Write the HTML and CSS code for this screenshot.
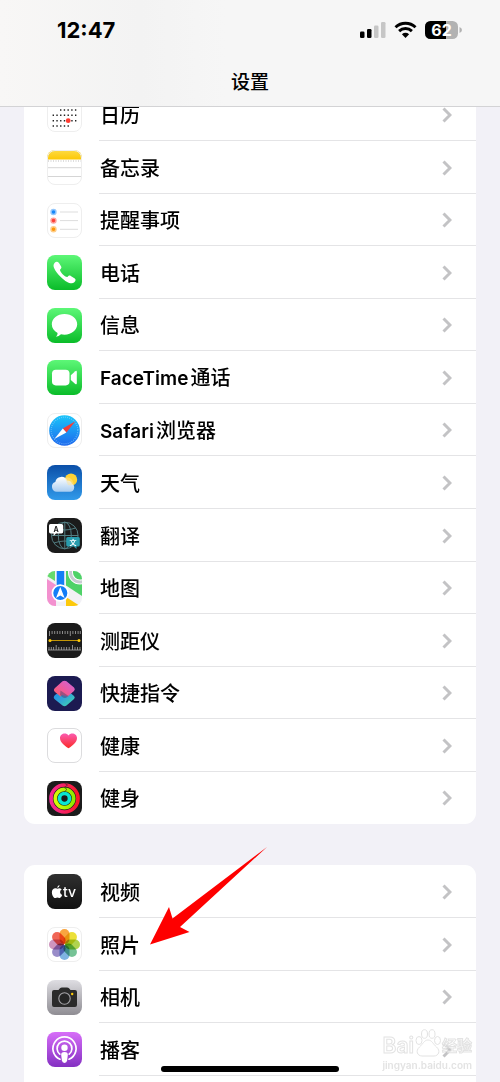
FILE: index.html
```html
<!DOCTYPE html>
<html lang="zh-CN">
<head>
  <meta charset="UTF-8">
  <meta name="viewport" content="width=device-width, initial-scale=1">
  <title>设置</title>
  <link rel="stylesheet" href="styles.css">
</head>
<body>

<header class="top-bar">
  <div class="status">
    <span class="time">12:47</span>
    <div class="status-icons">
      <svg class="signal" width="26" height="18" viewBox="0 0 26 18">
        <rect x="0" y="10.500" width="4.500" height="6.500" rx="1.300"/>
        <rect x="7" y="8" width="4.500" height="9" rx="1.300"/>
        <rect x="14" y="4.500" width="4.500" height="12.500" rx="1.300" fill="#c6c6c6"/>
        <rect x="21" y="1" width="4.500" height="16" rx="1.300" fill="#c6c6c6"/>
      </svg>
      <svg class="wifi" width="23" height="18" viewBox="0 0 23 18">
        <path d="M1.500 6.200A14.500 14.500 0 0 1 21.500 6.200M5.100 10.100A9.300 9.300 0 0 1 17.900 10.100" fill="none" stroke="#000" stroke-width="2.900"/>
        <path d="M11.500 17L7.900 13.200Q11.500 10.400 15.100 13.200Z"/>
      </svg>
      <svg class="battery" width="38" height="18" viewBox="0 0 38 18">
        <rect width="33" height="18" rx="5.500" fill="#b2b2b2"/>
        <path d="M5.500 0H21V18H5.500A5.500 5.500 0 0 1 0 12.500V5.500A5.500 5.500 0 0 1 5.500 0Z"/>
        <path d="M34.500 6Q37 7 37 9T34.500 12Z" fill="#b2b2b2"/>
        <text x="16.500" y="14.800" text-anchor="middle" class="battery-text">62</text>
      </svg>
    </div>
  </div>
  <h1>设置</h1>
</header>

<main class="settings">
  <nav class="group">
    <a class="row" href="#calendar">
      <svg class="icon light" viewBox="0 0 35 35">
        <g stroke="#222" stroke-width="1.400" stroke-dasharray="1.400 2.330">
          <path d="M13 13H30M5.600 18.300H30M5.600 23.700H30M5.600 29H22"/>
        </g>
        <circle cx="21.200" cy="23.700" r="2.400" fill="#ff3b30"/>
      </svg>
      <span class="label">日历</span>
      <svg class="chevron" viewBox="0 0 10 16"><path d="M1.500 1.500L8 8L1.500 14.500"/></svg>
    </a>
    <a class="row" href="#notes">
      <svg class="icon light" viewBox="0 0 35 35">
        <defs><linearGradient id="notes" x2="0" y2="1"><stop stop-color="#fddb45"/><stop offset="1" stop-color="#fcc806"/></linearGradient></defs>
        <path d="M0 0H35V9.500H0Z" fill="url(#notes)"/>
        <path d="M1 11H35" stroke="#bbb" stroke-dasharray="1 1.500"/>
        <path d="M0 17.700H35M0 26.500H35" stroke="#d5d5d5"/>
      </svg>
      <span class="label">备忘录</span>
      <svg class="chevron" viewBox="0 0 10 16"><path d="M1.500 1.500L8 8L1.500 14.500"/></svg>
    </a>
    <a class="row" href="#reminders">
      <svg class="icon light" viewBox="0 0 35 35">
        <path d="M13 9H31M13 17.600H31M13 26.300H31" stroke="#ddd"/>
        <g stroke-width="1.400">
          <circle cx="6.500" cy="9" r="2.500" fill="#1687fa" stroke="#93c7fc"/>
          <circle cx="6.500" cy="17.600" r="2.500" fill="#fb4238" stroke="#fda49f"/>
          <circle cx="6.500" cy="26.300" r="2.500" fill="#fd9709" stroke="#fecd88"/>
        </g>
      </svg>
      <span class="label">提醒事项</span>
      <svg class="chevron" viewBox="0 0 10 16"><path d="M1.500 1.500L8 8L1.500 14.500"/></svg>
    </a>
    <a class="row" href="#phone">
      <svg class="icon" viewBox="0 0 35 35">
        <defs><linearGradient id="green" x2="0" y2="1"><stop stop-color="#5df777"/><stop offset="1" stop-color="#0abc29"/></linearGradient></defs>
        <rect width="35" height="35" fill="url(#green)"/>
        <path d="M7.500 8C9 6.300 10.800 6.400 12 8L14 11.300C14.800 12.600 14.400 13.300 13 14.700C12.900 17 18 22.300 20.400 22C21.800 20.600 22.500 20.200 23.800 21L27.800 23.600C29 24.700 28.800 25.800 27.300 27.300C25 29.600 20 28.300 13.800 22C7.500 15.500 5 10.800 7.500 8Z" fill="#fff"/>
      </svg>
      <span class="label">电话</span>
      <svg class="chevron" viewBox="0 0 10 16"><path d="M1.500 1.500L8 8L1.500 14.500"/></svg>
    </a>
    <a class="row" href="#messages">
      <svg class="icon" viewBox="0 0 35 35">
        <rect width="35" height="35" fill="url(#green)"/>
        <path d="M17.500 6C24.700 6 30.200 10.600 30.200 16.300S24.700 26.700 17.500 26.700Q15.600 26.700 14 26.300Q11.800 28.400 9 28.700Q10.700 27 10.600 24.900C7 23 4.800 20 4.800 16.300C4.800 10.600 10.300 6 17.500 6Z" fill="#fff"/>
      </svg>
      <span class="label">信息</span>
      <svg class="chevron" viewBox="0 0 10 16"><path d="M1.500 1.500L8 8L1.500 14.500"/></svg>
    </a>
    <a class="row" href="#facetime">
      <svg class="icon" viewBox="0 0 35 35">
        <rect width="35" height="35" fill="url(#green)"/>
        <rect x="5" y="9.800" width="17.500" height="15.600" rx="3.800" fill="#fff"/>
        <path d="M23.800 15.200L28.300 11.200Q29.800 10.200 29.800 12V23.200Q29.800 25 28.300 24L23.800 20Z" fill="#fff"/>
      </svg>
      <span class="label"><span class="latin">FaceTime</span>通话</span>
      <svg class="chevron" viewBox="0 0 10 16"><path d="M1.500 1.500L8 8L1.500 14.500"/></svg>
    </a>
    <a class="row" href="#safari">
      <svg class="icon light" viewBox="0 0 35 35">
        <defs><linearGradient id="safari" x2="0" y2="1"><stop stop-color="#1bc6fa"/><stop offset="1" stop-color="#1e68ed"/></linearGradient></defs>
        <circle cx="17.500" cy="17.500" r="15.300" fill="url(#safari)"/>
        <circle cx="17.500" cy="17.500" r="13.300" fill="none" stroke="#8fd0fb" stroke-width="1.200" stroke-dasharray=".6 1.500"/>
        <path d="M28.400 8.300L19.400 19.500L15.800 15.500Z" fill="#f53e38"/>
        <path d="M7.300 26L15.800 15.500L19.400 19.500Z" fill="#fff"/>
      </svg>
      <span class="label"><span class="latin">Safari</span>浏览器</span>
      <svg class="chevron" viewBox="0 0 10 16"><path d="M1.500 1.500L8 8L1.500 14.500"/></svg>
    </a>
    <a class="row" href="#weather">
      <svg class="icon" viewBox="0 0 35 35">
        <defs>
          <linearGradient id="sky" x2="0" y2="1"><stop stop-color="#0b4fa8"/><stop offset="1" stop-color="#319aea"/></linearGradient>
          <linearGradient id="cloud" x2="0" y2="1"><stop stop-color="#fff"/><stop offset="1" stop-color="#a9cdf1"/></linearGradient>
        </defs>
        <rect width="35" height="35" fill="url(#sky)"/>
        <circle cx="24" cy="14.700" r="6.200" fill="#fed235"/>
        <path d="M9.700 26.700A5 5 0 0 1 8.300 17A6.300 6.300 0 0 1 20.200 15.500Q24.600 15.700 24.900 18.800Q27.400 19.700 27.200 22.800Q26.700 26.700 23 26.700Z" fill="url(#cloud)"/>
        <path d="M18 13.200Q20 11.300 23 13T27 19Q25 21 21 20Z" fill="#ffe396" opacity=".5"/>
      </svg>
      <span class="label">天气</span>
      <svg class="chevron" viewBox="0 0 10 16"><path d="M1.500 1.500L8 8L1.500 14.500"/></svg>
    </a>
    <a class="row" href="#translate">
      <svg class="icon" viewBox="0 0 35 35">
        <rect width="35" height="35" fill="#1b1b1b"/>
        <g fill="none" stroke="#527c80" stroke-width="1">
          <circle cx="17.800" cy="17.500" r="13.300"/>
          <ellipse cx="17.800" cy="17.500" rx="6.500" ry="13.300"/>
          <path d="M17.800 4.200V30.800M4.500 17.500H31.100M7 10Q17.800 14 28.600 10M7 25Q17.800 21 28.600 25"/>
        </g>
        <path d="M3.500 6H14.500Q16.200 6 16.200 7.700V13.800Q16.200 15.500 14.500 15.500H9L6.600 18V15.500H3.500Q2 15.500 2 13.800V7.700Q2 6 3.500 6Z" fill="#fff"/>
        <path d="M20.700 19H31.300Q32.800 19 32.800 20.500V27Q32.800 28.600 31.300 28.600H29.500V31L26.700 28.600H20.700Q19.200 28.600 19.200 27V20.500Q19.200 19 20.700 19Z" fill="#299cad"/>
        <text x="9.200" y="13.500" text-anchor="middle" class="bubble-text" fill="#222">A</text>
        <text x="26" y="26.600" text-anchor="middle" class="bubble-text" fill="#fff">文</text>
      </svg>
      <span class="label">翻译</span>
      <svg class="chevron" viewBox="0 0 10 16"><path d="M1.500 1.500L8 8L1.500 14.500"/></svg>
    </a>
    <a class="row" href="#maps">
      <svg class="icon" viewBox="0 0 35 35">
        <rect width="35" height="35" fill="#f2f1f5"/>
        <path d="M0 0H8V10L0 5Z" fill="#65da6c"/>
        <path d="M19 0H35V25L19 14.500Z" fill="#4fd268"/>
        <path d="M0 8L9 14V35H0Z" fill="#f391cf"/>
        <path d="M19 26L33 35H19Z" fill="#fdc90b"/>
        <circle cx="33" cy="1.500" r="9.500" fill="none" stroke="#fff" stroke-width="5"/>
        <circle cx="33" cy="1.500" r="9.500" fill="none" stroke="#c9cbd2" stroke-width="3"/>
        <path d="M9.700 0H17.200V15H9.700Z" fill="#147ef7"/>
        <circle cx="13.300" cy="22" r="7.900" fill="#147ef7" stroke="#fff" stroke-width="1.700"/>
        <path d="M13.300 16L17.600 27L13.300 24.400L9 27Z" fill="#fff"/>
      </svg>
      <span class="label">地图</span>
      <svg class="chevron" viewBox="0 0 10 16"><path d="M1.500 1.500L8 8L1.500 14.500"/></svg>
    </a>
    <a class="row" href="#measure">
      <svg class="icon" viewBox="0 0 35 35">
        <rect width="35" height="35" fill="#1b1b1b"/>
        <path d="M2.500 8V13M5.100 8V11M7.700 8V11M10.300 8V11M12.900 8V11M15.500 8V11M18.100 8V11M20.700 8V11M23.300 8V13M25.900 8V11M28.500 8V11M31.100 8V11M33.300 8V11" stroke="#aaa" stroke-width=".8"/>
        <path d="M2 24V27M4.300 24V27M6.600 24V27M9.200 22V27M11.800 24V27M14.400 24V27M17 24V27M19.600 24V27M22.200 24V27M25.500 22V27M28 24V27M30.500 24V27M33 24V27M1 27H34" stroke="#aaa" stroke-width=".8"/>
        <path d="M3 17.500H32" stroke="#d7a606" stroke-width=".9"/>
        <circle cx="3" cy="17.500" r="1.500" fill="#ffcb0c"/>
        <circle cx="32" cy="17.500" r="1.500" fill="#ffcb0c"/>
      </svg>
      <span class="label">测距仪</span>
      <svg class="chevron" viewBox="0 0 10 16"><path d="M1.500 1.500L8 8L1.500 14.500"/></svg>
    </a>
    <a class="row" href="#shortcuts">
      <svg class="icon" viewBox="0 0 35 35">
        <defs>
          <linearGradient id="pink" x1="0" y1="1" x2="1" y2="0"><stop stop-color="#fc6060"/><stop offset=".5" stop-color="#ec5aa3"/><stop offset="1" stop-color="#c766df"/></linearGradient>
          <linearGradient id="blue" x2="1" y2="1"><stop stop-color="#1b8de8"/><stop offset=".5" stop-color="#33a4d6"/><stop offset="1" stop-color="#40e3a4"/></linearGradient>
        </defs>
        <rect width="35" height="35" fill="#1c1b51"/>
        <path d="M8 19L15.500 14H20L27 20Q28.600 21.600 27 23L19.500 29.500Q17.500 31 15.500 29.500L8 23.500Q5.500 21.500 8 19Z" fill="url(#blue)"/>
        <path d="M15.500 5.300Q17.500 4 19.500 5.300L27 11.500Q28.700 13.300 27 15L20.500 20.500L15 19L13.500 20.500L8 16Q5.800 14 8 12Z" fill="url(#pink)"/>
        <path d="M13.500 14.500L21.500 20L19.500 21.500Q17.500 22.800 15.500 21.300L13 19Z" fill="#554778" opacity=".55"/>
      </svg>
      <span class="label">快捷指令</span>
      <svg class="chevron" viewBox="0 0 10 16"><path d="M1.500 1.500L8 8L1.500 14.500"/></svg>
    </a>
    <a class="row" href="#health">
      <svg class="icon light outlined" viewBox="0 0 35 35">
        <defs><linearGradient id="heart" x2="0" y2="1"><stop stop-color="#fb5bb0"/><stop offset="1" stop-color="#fb2b27"/></linearGradient></defs>
        <path d="M21.500 20.200C17 17.500 13 14 13 10C13 5.500 19 3.800 21.500 7.500C24 3.800 30 5.500 30 10C30 14 26 17.500 21.500 20.200Z" fill="url(#heart)"/>
      </svg>
      <span class="label">健康</span>
      <svg class="chevron" viewBox="0 0 10 16"><path d="M1.500 1.500L8 8L1.500 14.500"/></svg>
    </a>
    <a class="row" href="#fitness">
      <svg class="icon" viewBox="0 0 35 35">
        <defs>
          <linearGradient id="move"><stop stop-color="#f42995"/><stop offset="1" stop-color="#f91828"/></linearGradient>
          <linearGradient id="exercise"><stop stop-color="#d7fa05"/><stop offset="1" stop-color="#8eeb00"/></linearGradient>
        </defs>
        <rect width="35" height="35" fill="#1b1b1b"/>
        <g fill="none" stroke-width="3.700">
          <circle cx="17.500" cy="17.500" r="13.500" stroke="url(#move)"/>
          <circle cx="17.500" cy="17.500" r="9.200" stroke="url(#exercise)"/>
          <circle cx="17.500" cy="17.500" r="5" stroke="#09e6d2"/>
        </g>
        <path d="M17.500 2.200L20.500 4L17.500 6.500M17.500 6.700L20 8.400L17.500 10.700" fill="none" stroke="#222" stroke-width=".6"/>
      </svg>
      <span class="label">健身</span>
      <svg class="chevron" viewBox="0 0 10 16"><path d="M1.500 1.500L8 8L1.500 14.500"/></svg>
    </a>
  </nav>

  <nav class="group">
    <a class="row" href="#tv">
      <svg class="icon" viewBox="0 0 35 35">
        <defs><linearGradient id="tv" x2="0" y2="1"><stop stop-color="#303030"/><stop offset="1" stop-color="#101010"/></linearGradient></defs>
        <rect width="35" height="35" fill="url(#tv)"/>
        <path d="M12.600 11Q12.500 13.500 10.200 13.900Q10.300 11.600 12.600 11ZM10.200 14.800Q12.600 13.400 14.700 15.300Q12.800 16.500 13.100 18.500Q13.500 20.300 15.200 20.900Q13.900 24.500 12.300 24Q10.300 23.200 8.600 24C6.600 24.500 4.700 20.800 4.900 18C5.200 14.700 7.700 13.600 10.200 14.800Z" fill="#fff"/>
        <text x="16" y="23.300" class="tv-text">tv</text>
      </svg>
      <span class="label">视频</span>
      <svg class="chevron" viewBox="0 0 10 16"><path d="M1.500 1.500L8 8L1.500 14.500"/></svg>
    </a>
    <a class="row" href="#photos">
      <svg class="icon light" viewBox="0 0 35 35">
        <g class="petals">
          <rect x="12.500" y="2" width="10" height="15" rx="5" fill="#f99b2b"/>
          <rect x="12.500" y="2" width="10" height="15" rx="5" fill="#eadd23" transform="rotate(45 17.500 17.500)"/>
          <rect x="12.500" y="2" width="10" height="15" rx="5" fill="#a8cf3b" transform="rotate(90 17.500 17.500)"/>
          <rect x="12.500" y="2" width="10" height="15" rx="5" fill="#67bd8b" transform="rotate(135 17.500 17.500)"/>
          <rect x="12.500" y="2" width="10" height="15" rx="5" fill="#71acdf" transform="rotate(180 17.500 17.500)"/>
          <rect x="12.500" y="2" width="10" height="15" rx="5" fill="#8e80c3" transform="rotate(225 17.500 17.500)"/>
          <rect x="12.500" y="2" width="10" height="15" rx="5" fill="#c989b8" transform="rotate(270 17.500 17.500)"/>
          <rect x="12.500" y="2" width="10" height="15" rx="5" fill="#ef5545" transform="rotate(315 17.500 17.500)"/>
        </g>
      </svg>
      <span class="label">照片</span>
      <svg class="chevron" viewBox="0 0 10 16"><path d="M1.500 1.500L8 8L1.500 14.500"/></svg>
    </a>
    <a class="row" href="#camera">
      <svg class="icon" viewBox="0 0 35 35">
        <defs><linearGradient id="camera" x2="0" y2="1"><stop stop-color="#dedde2"/><stop offset="1" stop-color="#8f8d93"/></linearGradient></defs>
        <rect width="35" height="35" fill="url(#camera)"/>
        <path d="M7 10H11.500L13 8.300Q13.700 7.500 15 7.500H20Q21.300 7.500 22 8.300L23.500 10H28Q30 10 30 12V25Q30 27 28 27H7Q5 27 5 25V12Q5 10 7 10Z" fill="#2b2b2b"/>
        <circle cx="17.500" cy="18.500" r="5.700" fill="#252525" stroke="#a5a4a8" stroke-width="1.100"/>
        <circle cx="25.200" cy="14" r="1.200" fill="#fecb08"/>
      </svg>
      <span class="label">相机</span>
      <svg class="chevron" viewBox="0 0 10 16"><path d="M1.500 1.500L8 8L1.500 14.500"/></svg>
    </a>
    <a class="row" href="#podcasts">
      <svg class="icon" viewBox="0 0 35 35">
        <defs><linearGradient id="podcast" x2="0" y2="1"><stop stop-color="#d76ef8"/><stop offset="1" stop-color="#8430c2"/></linearGradient></defs>
        <rect width="35" height="35" fill="url(#podcast)"/>
        <g fill="none" stroke="#fff" stroke-width="1.700" stroke-linecap="round">
          <path d="M13 27.200A11.600 11.600 0 1 1 22 27.200"/>
          <path d="M12.800 22.200A7.400 7.400 0 1 1 22.200 22.200"/>
        </g>
        <circle cx="17.500" cy="15.700" r="3.200" fill="#fff"/>
        <path d="M17.500 20Q21.100 20 20.800 23L20.100 28.600Q19.700 31 17.500 31T14.900 28.600L14.200 23Q13.900 20 17.500 20Z" fill="#fff"/>
      </svg>
      <span class="label">播客</span>
      <svg class="chevron" viewBox="0 0 10 16"><path d="M1.500 1.500L8 8L1.500 14.500"/></svg>
    </a>
  </nav>

  <svg class="arrow" viewBox="0 0 118 99">
    <path d="M0 97.500L19 60L22.500 71.500L117 0L30 80L39.500 85Z" fill="#fe0000"/>
  </svg>
</main>

<div class="watermark">
  <div class="brand">
    <span>Bai</span>
    <svg width="28" height="28" viewBox="0 0 28 28">
      <g fill="#fff" stroke="#dedede">
        <ellipse cx="5" cy="11.500" rx="3" ry="4"/>
        <ellipse cx="10.500" cy="5" rx="3" ry="4.300"/>
        <ellipse cx="18" cy="5" rx="3" ry="4.300"/>
        <ellipse cx="23.500" cy="11.500" rx="3" ry="4"/>
        <path d="M14 11C18 11 19 15 22.500 18C27 22 24.500 27 20 27H8C3.500 27 1 22 5.500 18C9 15 10 11 14 11Z"/>
      </g>
      <text x="14" y="24.500" text-anchor="middle" class="du">du</text>
    </svg>
    <span class="brand-cjk">经验</span>
  </div>
  <div class="site">jingyan.baidu.com</div>
</div>

<div class="home-indicator"></div>

</body>
</html>
```

FILE: styles.css
```css
* { box-sizing: border-box; }
body {
  margin: 0;
  min-height: 100vh;
  display: flex;
  flex-direction: column;
  background: #f2f1f7;
  color: #000;
  font-family: Inter, "Noto Sans CJK SC", sans-serif;
}

/* header stays above the scrolled list */
.top-bar {
  position: fixed;
  top: 0;
  left: 0;
  right: 0;
  z-index: 2;
  height: 107px;
  background: linear-gradient(90deg, #f8f7f6, #f3f3f3 28%, #f6f6f6 45%);
  border-bottom: 1px solid #d3d3d5;
}
.status {
  display: flex;
  justify-content: space-between;
  align-items: center;
  height: 60px;
  padding: 0 37px 0 57px;
}
.time { font-size: 22px; font-weight: 700; line-height: 24px; }
.status-icons { display: flex; align-items: center; gap: 8px; }
.battery-text { font-size: 16px; font-weight: 700; fill: #fff; }
h1 {
  margin: 0;
  padding-top: 8px;
  text-align: center;
  font-size: 19px;
  line-height: 30px;
  font-weight: 500;
}

.settings {
  position: relative;
  flex: 1;
  display: flex;
  flex-direction: column;
  gap: 41px;
  padding: 88px 24px 0;
}
.group { background: #fff; border-radius: 11px; overflow: hidden; }
/* the second group carries on past the bottom of the screen */
.group:last-of-type { flex: 1; border-radius: 11px 11px 0 0; }
.row {
  display: flex;
  align-items: center;
  height: 53px;
  padding: 0 24px 0 23px;
  color: inherit;
  text-decoration: none;
  background: linear-gradient(#e4e4e6, #e4e4e6) 75px 100% / 100% 1px no-repeat;
}
.row:nth-child(7n+3), .row:nth-child(7n+5), .row:nth-child(7n) { height: 52px; }
.group:first-of-type .row:last-child { background: none; }
.icon { width: 35px; height: 35px; border-radius: 8px; flex: none; }
.light { outline: 1px solid #eee; outline-offset: -1px; }
.outlined { outline-color: #dcdcde; }
.label {
  flex: 1;
  margin-left: 18px;
  padding-top: 2px;
  font-size: 20px;
  line-height: 30px;
  font-weight: 500;
}
.latin { margin-right: 2px; font-size: 19px; font-weight: 600; }
.chevron { width: 10px; height: 16px; fill: none; stroke: #c3c3c5; stroke-width: 3; }

.bubble-text { font-size: 7px; font-weight: 700; }
.tv-text { font-size: 14px; font-weight: 500; fill: #fff; }
.petals rect { mix-blend-mode: multiply; opacity: .9; }

.arrow { position: absolute; left: 150px; top: 847px; width: 118px; height: 99px; }

.watermark {
  position: fixed;
  right: 28px;
  bottom: 9px;
  color: #fff;
  opacity: .85;
  -webkit-text-stroke: 1px #dedede;
}
.brand { display: flex; align-items: flex-end; justify-content: flex-end; font-size: 21px; line-height: 22px; font-weight: 600; }
.brand-cjk { font-size: 15px; }
.du { font-size: 12px; font-weight: 500; fill: #fff; }
.site { font-size: 10px; line-height: 16px; font-weight: 600; -webkit-text-stroke: 0; color: #dedede; }

.home-indicator {
  position: fixed;
  bottom: 10px;
  left: 50%;
  width: 178px;
  height: 6px;
  border-radius: 3px;
  background: #000;
  transform: translateX(-50%);
}
```
